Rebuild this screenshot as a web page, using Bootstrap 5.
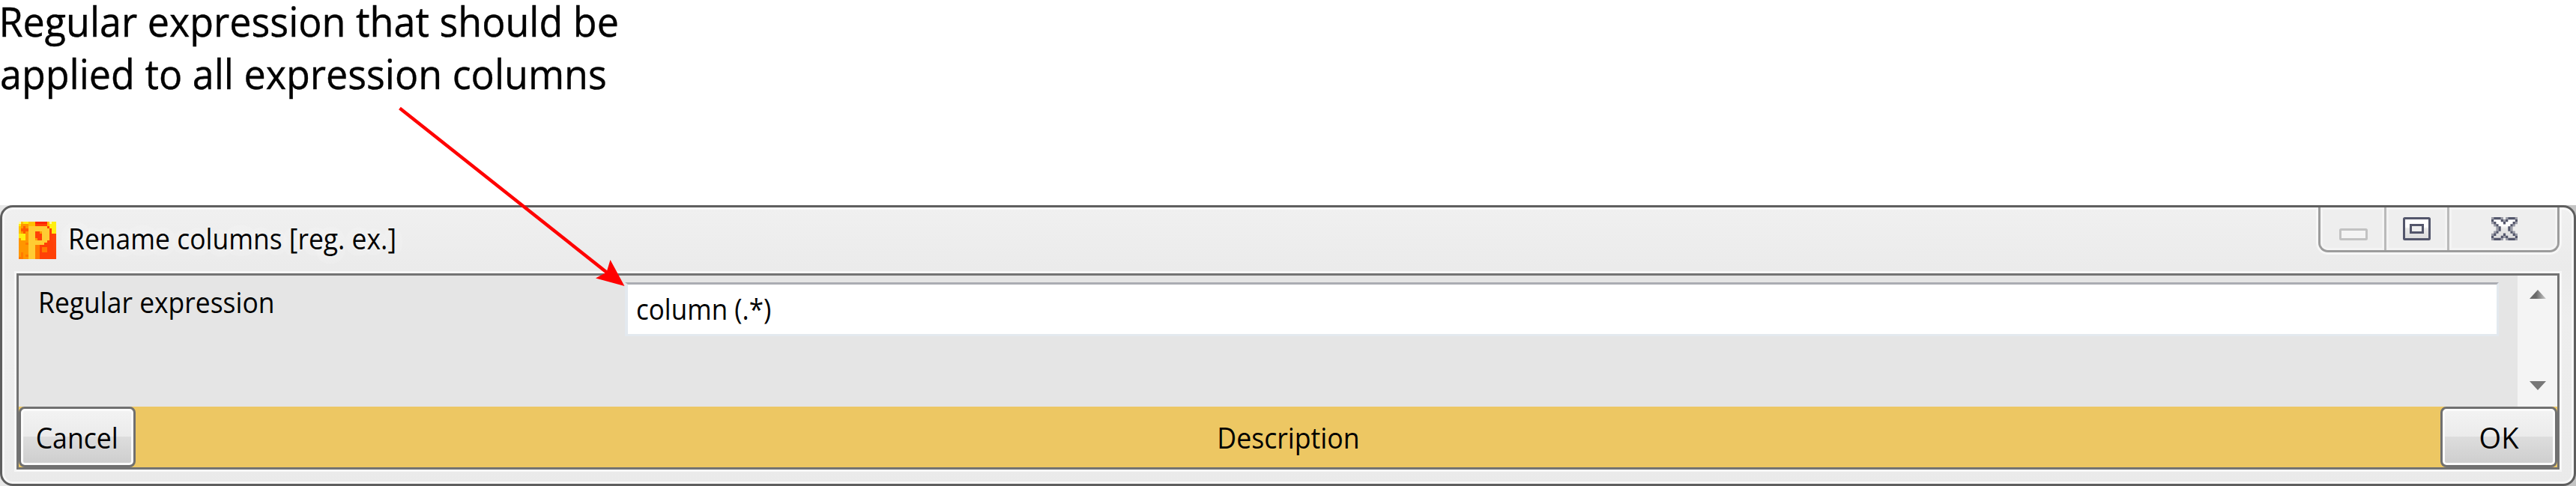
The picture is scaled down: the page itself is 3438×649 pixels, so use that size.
<!DOCTYPE html>
<html lang="en">
<head>
<meta charset="utf-8">
<title>Rename columns</title>
<link rel="stylesheet" href="https://cdn.jsdelivr.net/npm/bootstrap@5.3.0/dist/css/bootstrap.min.css">
<style>
  body { width: 3438px; height: 649px; overflow: hidden; background: #fff; color: #000; font-family: "Open Sans", "Noto Sans", sans-serif; font-size: 38px; line-height: 50px; }
  .sheet { width: 3438px; height: 649px; }
  .note { height: 274px; font-size: 55px; line-height: 56px; -webkit-text-stroke: .4px #000; }
  .note > div + div { margin-top: 14px; }
  .fit { display: inline-block; white-space: nowrap; transform: scaleX(.946); transform-origin: 0 50%; }
  .fit-lead { transform: translateX(-1.5px) scaleX(.946); }
  .fit-title { transform: scaleX(.933); text-shadow: 0 0 24px #fff, 0 0 24px #fff; }
  .fit-label { transform: scaleX(.933); }
  .fit-value { transform: scaleX(.922); }
  .fit-mid { transform: scaleX(.938); transform-origin: 50% 50%; }
  .pointer { left: 520px; top: 130px; }
  .win-back { height: 375px; background: linear-gradient(90deg, #e8e8e8, #c4c4c4); }
  .win { height: 375px; border: 3px solid #5e5e5e; border-radius: 17px; background: linear-gradient(#f0f0f0, #ebebeb 80px, #eee 150px, #eaeaea); box-shadow: inset 0 0 0 3px #f7f7f7; padding: 0 19px 19px; }
  .win-title { height: 88px; padding-left: 3px; }
  .app-icon { margin-top: 19px; }
  .win-name { margin: 16px 0 0 16px; }
  .controls { width: 322px; height: 60px; border: 3px solid #9c9c9c; border-top: 0; border-radius: 0 0 13px 13px; box-shadow: 0 0 0 3px #f7f7f7; clip-path: inset(0 -3px -3px -3px); background: #eee; }
  .ctl { box-shadow: inset 0 0 0 3px #f4f4f4; padding-top: 13px; }
  .ctl:first-child { border-bottom-left-radius: 10px; }
  .ctl:last-child { border-bottom-right-radius: 10px; }
  .ctl + .ctl { border-left: 3px solid #bababa; }
  .ctl-min { width: 85px; padding-left: 25px; }
  .ctl-max { width: 84px; padding-left: 22px; }
  .ctl-close { padding-left: 56px; }
  .client { height: 262px; border: 3px solid #737373; box-shadow: 0 0 0 3px #f7f7f7; background: #e5e5e5; }
  .form-area { height: 175px; }
  .field-label { width: 809px; padding: 10px 0 0 26px; }
  .field { width: 2501px; height: 72px; margin-top: 9px; border: 3px solid #e3e9ef; border-top-color: #abadb3; border-left-width: 4px; background: #fff; padding-left: 11px; line-height: 64px; }
  .scroll { width: 53px; background: #f4f4f4; padding: 19px 0 22px; }
  .foot { height: 81px; background: #edc763; }
  .push { width: 156px; border: 3px solid #707070; border-radius: 8px; box-shadow: inset 0 0 0 3px #fbfbfb; background: linear-gradient(#f3f3f3, #ebebeb 50%, #ddd 50%, #cdcdcd); padding: 0; font: inherit; color: #000; }
  svg { display: block; }
</style>
</head>
<body>
<div class="sheet d-flex flex-column position-relative">
  <div class="note">
    <div><span class="fit fit-lead">Regular expression that should be</span></div>
    <div><span class="fit">applied to all expression columns</span></div>
  </div>
  <div class="win-back">
    <div class="win">
      <div class="win-title d-flex align-items-start">
        <svg class="app-icon" width="50" height="50" viewBox="0 0 16 16" shape-rendering="crispEdges">
          <rect width="16" height="16" fill="#ff4006"/>
          <path fill="#ff9600" d="M0 0h7v3H4v13H0z"/>
          <path fill="#ffc000" d="M0 2h1v3H0zM4 0h3v2H4zM1 0h1v1H1zM12 0h1v2h-1z"/>
          <path fill="#ffee10" d="M0 0h1v2H0zM2 0h2v1H2zM0 5h3v2H0zM1 7h2v1H1zM13 0h3v3h-3zM14 3h2v2h-2z"/>
          <path fill="#fff9a0" d="M0 0h1v1H0zM13 0h1v1h-1z"/>
          <path fill="#ff5a00" d="M1 3h3v1H1zM2 4h1v1H2zM2 2h1v1H2z"/>
          <path fill="#ff2400" d="M7 0h5v1H7z"/>
          <path fill="#ff7a00" d="M1 13h1v2H1zM3 14h1v1H3zM0 15h2v1H0zM7 10h2v6H7zM10 11h2v2h-2zM3 9h1v1H3z"/>
          <path fill="#ffcc33" fill-rule="evenodd" d="M4.200 2H12v1h1v5h-1v1h-1v1H7v6H4.200zM7 4v4h3V4z"/>
          <path fill="#ff9c00" d="M7 7h1v1H7zM9 4h1v1H9z"/>
        </svg>
        <span class="win-name"><span class="fit fit-title">Rename columns [reg. ex.]</span></span>
        <div class="controls d-flex ms-auto">
          <span class="ctl ctl-min">
            <svg width="38" height="31"><rect x="1.500" y="16.500" width="35" height="13" rx="1" fill="#f4f4f4" stroke="#c2c2c2" stroke-width="3"/></svg>
          </span>
          <span class="ctl ctl-max">
            <svg width="37" height="31">
              <defs><linearGradient id="shine" x1="0" y1="0" x2="0" y2="1"><stop offset=".4" stop-color="#fff"/><stop offset=".5" stop-color="#e9e9e9"/><stop offset="1" stop-color="#dcdcdc"/></linearGradient></defs>
              <rect x="1.500" y="1.500" width="34" height="28" rx="1" fill="url(#shine)" stroke="#53566b" stroke-width="3"/>
              <rect x="10.500" y="10.500" width="16" height="10" fill="#eee" stroke="#53566b" stroke-width="3"/>
            </svg>
          </span>
          <span class="ctl ctl-close flex-grow-1">
            <svg width="35" height="31" viewBox="0 0 11 10" preserveAspectRatio="none" fill="none">
              <defs><linearGradient id="shineX" gradientUnits="userSpaceOnUse" x1="0" y1="0" x2="0" y2="10"><stop offset=".35" stop-color="#fff"/><stop offset=".5" stop-color="#e6e6e6"/><stop offset="1" stop-color="#dcdcdc"/></linearGradient></defs>
              <path stroke="url(#shineX)" stroke-width="1.060" d="M1 1.500h3m3 0h3M2 2.500h3m1 0h3M3 3.500h5M4 4.500h3M4 5.500h3M3 6.500h5M2 7.500h3m1 0h3M1 8.500h3m3 0h3"/>
              <path stroke="#9a9ca6" d="M0 .5h1m3 0h1m1 0h1m3 0h1M5 1.500h1M0 2.500h1m9 0h1M1 3.500h1m7 0h1M2 4.500h1m5 0h1M2 5.500h1m5 0h1M1 6.500h1m7 0h1M0 7.500h1m9 0h1M5 8.500h1M0 9.500h1m3 0h1m1 0h1m3 0h1"/>
              <path stroke="#53566b" stroke-width="1.060" d="M1 .5h3m3 0h3M0 1.500h1m3 0h1m1 0h1m3 0h1M1 2.500h1m3 0h1m3 0h1M2 3.500h1m5 0h1M3 4.500h1m3 0h1M3 5.500h1m3 0h1M2 6.500h1m5 0h1M1 7.500h1m3 0h1m3 0h1M0 8.500h1m3 0h1m1 0h1m3 0h1M1 9.500h3m3 0h3"/>
            </svg>
          </span>
        </div>
      </div>
      <div class="client">
        <div class="form-area d-flex">
          <div class="field-label"><span class="fit fit-label">Regular expression</span></div>
          <div class="field"><span class="fit fit-value">column (.*)</span></div>
          <div class="scroll ms-auto d-flex flex-column justify-content-between align-items-center">
            <svg width="22" height="12"><defs><linearGradient id="arrow"><stop offset=".4" stop-color="#6a6a6a"/><stop offset="1" stop-color="#ccc"/></linearGradient></defs><path fill="url(#arrow)" d="M11 0L22 12H0z"/></svg>
            <svg width="22" height="12"><path fill="#777" d="M0 0h22L11 12z"/></svg>
          </div>
        </div>
        <div class="foot d-flex justify-content-between align-items-stretch">
          <button class="push"><span class="fit fit-mid">Cancel</span></button>
          <span class="align-self-center"><span class="fit fit-mid">Description</span></span>
          <button class="push">OK</button>
        </div>
      </div>
    </div>
  </div>
  <svg class="pointer position-absolute" width="330" height="260" viewBox="520 130 330 260">
    <path stroke="#f00" stroke-width="4.500" d="M533.500 144.500L812 365.500"/>
    <path fill="#f00" d="M833.500 382L795 371.500L809.500 363.500L814.500 347z"/>
  </svg>
</div>
<script src="https://cdn.jsdelivr.net/npm/bootstrap@5.3.0/dist/js/bootstrap.bundle.min.js"></script>
</body>
</html>
